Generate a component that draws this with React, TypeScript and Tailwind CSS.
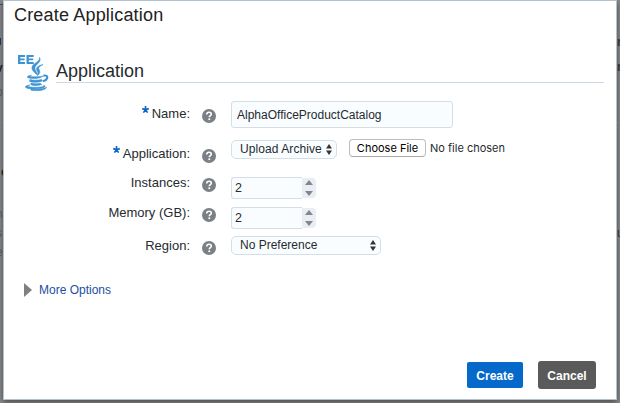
import type { ReactNode } from "react";

function Help({ className }: { className: string }) {
  return (
    <svg className={`ml-3 h-[14px] w-[14px] shrink-0 ${className}`} viewBox="0 0 14 14">
      <circle cx="7" cy="7" r="7" fill="#7b8086" />
      <path d="M4.7 5.5C4.8 4 5.8 3.3 7.1 3.3s2.2.7 2.2 1.9c0 1.5-2 1.5-2 3.1" fill="none" stroke="#fff" strokeWidth="1.6" />
      <rect x="6.4" y="9.4" width="1.8" height="1.7" fill="#fff" />
    </svg>
  );
}

function Row({ label, required, height, labelPad, helpPad, children }: {
  label: string; required?: boolean; height: string; labelPad: string; helpPad: string; children: ReactNode;
}) {
  return (
    <div className={`flex items-start ${height}`}>
      <div className={`flex w-[186px] justify-end text-[13px] leading-4 ${labelPad}`}>
        {required && (
          <svg className="mr-[3px] h-[7px] w-[7px]" viewBox="0 0 7 7">
            <path d="M3.5 3.7V0M3.5 3.7L0.2 2.6M3.5 3.7L6.8 2.6M3.5 3.7L1.4 6.6M3.5 3.7L5.6 6.6" stroke="#0b66cb" strokeWidth="1.6" />
          </svg>
        )}
        <span className="whitespace-nowrap">{label}</span>
      </div>
      <Help className={helpPad} />
      <div className="ml-[15px] flex">{children}</div>
    </div>
  );
}

function Select({ value, className }: { value: string; className: string }) {
  return (
    <div className={`flex items-center justify-between rounded-[5px] border border-[#d3dfe5] bg-[#f9fdff] pr-1 pb-px pl-2 text-[12px] ${className}`}>
      <span className="whitespace-nowrap leading-4">{value}</span>
      <svg className="mt-px h-[11px] w-[6px] shrink-0" viewBox="0 0 6 11">
        <path d="M3 0L6 4.6H0zM3 11L0 6.4H6z" fill="#333" />
      </svg>
    </div>
  );
}

function Spinner({ value }: { value: string }) {
  return (
    <div className="flex h-[22px]">
      <div className="flex w-[71px] items-center rounded-l-[3px] border border-r-0 border-[#d3dfe5] bg-[#f9fdff] pl-[3px] text-[12.5px]">{value}</div>
      <svg className="mt-px h-[20px] w-[14px] rounded-r-sm bg-[#e9edf4]" viewBox="0 0 14 20">
        <path d="M7 2L11 7H3zM7 18L3 13H11z" fill="#83878b" />
      </svg>
    </div>
  );
}

function JavaIcon() {
  return (
    <svg className="h-[38px] w-[32px] shrink-0" viewBox="0 0 32 38">
      <path d="M1 2H8V4H3.300V5.500H7.600V7.300H3.300V9H8V11H1zM9.500 2H16.700V4H11.800V5.500H16.200V7.300H11.800V9H16.700V11H9.500z" fill="#3e93d2" />
      <g fill="#3e93d2" stroke="#3e93d2" strokeWidth="0.6">
        <path d="M22.6 4.500c2.600 5.200-5.400 7-4.700 11.300.3 2 2.400 3.700 3 6.700-3-2.600-6.300-5-5.900-8.200.5-4 7.700-5 7.600-9.800z" />
        <path d="M26 11.600c-4.300 2.200-5 3.400-3.800 5.200 1.200 1.800.7 4-1.500 5.400.7-2 .3-2.900-.7-4.600-1.500-2.600.6-5 6-6z" />
        <path d="M14.500 22.300c-2 .8-2 1.300 0 1.400 4.500.4 8.800 0 12-.8-2.500 2.100-8 2.900-13 2.400-5-.5-3.600-2.700 1-3z" />
        <path d="M13 26.500c3 1 7.500 1 11.500.1l1 1.300c-4.500 1.700-10 1.800-13 .4zM14 30c2.800 1 6 .9 9 .2l1.800 1.300c-3.800 1.400-8.600 1.400-11 .1z" />
        <path d="M13 32c-3 .7-3 1.700.5 2 5 .6 10.500.4 13.500-.7l-.4-1.100c3.400 1.400.4 2.900-4.400 3.400-5 .6-10.400.3-12.700-.7-2.500-1.100-.2-2.700 3.500-2.900z" />
        <path d="M14 36c6 .5 12.500.1 15.600-1.700-1.400 3.300-9.800 4.200-15.600 2.900z" />
      </g>
      <path d="M26.500 22.600c5.500-1.100 4.800 4.200-.5 5.700" fill="none" stroke="#3e93d2" strokeWidth="2.100" />
    </svg>
  );
}

export default function App() {
  return (
    <div className="relative h-[403px] overflow-hidden bg-[#8b8b8b] px-[3px] font-['Liberation_Sans',Arial,sans-serif] text-[#252b30]">
      <div className="relative flex h-[400px] flex-col border border-[#b4c1ce] bg-white shadow-[0_2px_6px_rgba(0,0,0,0.5)]">
        <h1 className="mt-1 ml-[10px] h-[48px] text-[18px] leading-[21px] tracking-[0.18px] whitespace-nowrap text-[#222]">Create Application</h1>
        <div className="ml-[13px] flex h-[48px]">
          <JavaIcon />
          <h2 className="ml-[7px] h-[30px] w-[548px] border-b border-[#ccd8e5] pt-[8px] text-[18px] leading-[20px]">Application</h2>
        </div>
        <Row label="Name:" required height="h-[38px]" labelPad="pt-[5px]" helpPad="mt-[8px]">
          <div className="flex h-[27px] w-[222px] items-center rounded-[3px] border border-[#d3dfe5] bg-[#f9fdff] pl-[5px] text-[12px]">AlphaOfficeProductCatalog</div>
        </Row>
        <Row label="Application:" required height="h-[38px]" labelPad="pt-[7px]" helpPad="mt-[10px]">
          <Select value="Upload Archive" className="mt-px h-[19px] w-[106px] tracking-[0.08px]" />
          <div className="ml-3 flex h-[18px] w-[77px] items-center justify-center rounded-[4px] border border-[#bdbdbd] border-b-[#aaa] bg-white font-[Inter] text-[11px] whitespace-nowrap text-black">Choose File</div>
          <span className="ml-1 font-[Inter] text-[11px] leading-[18px] whitespace-nowrap">No file chosen</span>
        </Row>
        <Row label="Instances:" height="h-[30px]" labelPad="-mt-[2px]" helpPad="mt-px"><Spinner value="2" /></Row>
        <Row label="Memory (GB):" height="h-[29px]" labelPad="-mt-[2px]" helpPad="mt-[1px]"><Spinner value="2" /></Row>
        <Row label="Region:" height="h-[47px]" labelPad="pt-[2px]" helpPad="mt-[5px]">
          <Select value="No Preference" className="h-[19px] w-[150px]" />
        </Row>
        <div className="ml-5 flex h-[14px] items-center text-[12px] text-[#1c4f9f]">
          <svg className="h-[14px] w-[8px]" viewBox="0 0 8 14"><path d="M0 0L8 7L0 14z" fill="#7e8184" /></svg>
          <span className="ml-[7px] leading-4">More Options</span>
        </div>
        <div className="mt-auto mr-5 mb-[10px] flex items-center justify-end gap-[15px] text-[12px] font-bold text-white">
          <button className="h-[26px] w-[56px] rounded-[2px] bg-[#0569cc] pt-px">Create</button>
          <button className="h-[28px] w-[58px] rounded-[3px] bg-[#5a5a5a] pt-px">Cancel</button>
        </div>
      </div>
      <div className="absolute top-0 left-0 h-[403px] w-[3px] overflow-hidden text-[12px] leading-[14px] text-[#555]">
        <div className="absolute top-[4px] h-px w-[3px] bg-[#24507c]" />
        <div className="absolute top-[38px] h-[7px] w-px bg-[#24345f]" />
        <b className="absolute top-[61px] -left-[4px] text-[#222]">v</b>
        <span className="absolute top-[85px] -left-[4px]">p</span>
        <div className="absolute top-[122px] h-px w-[3px] bg-[#777b80]" />
        <b className="absolute top-[165px] left-[1px] text-[#222]">c</b>
        <span className="absolute top-[207px] -left-[4px]">n</span>
        <span className="absolute top-[226px] -left-[4px]">s</span>
        <span className="absolute top-[245px] -left-[4px]">e</span>
      </div>
      <div className="absolute top-0 right-0 h-[403px] w-[3px] overflow-hidden text-[12px] leading-[14px] text-[#333]">
        <b className="absolute top-[35px] left-0">n</b>
        <b className="absolute top-[60px] left-0">n</b>
        <div className="absolute top-[122px] h-px w-[3px] bg-[#777b80]" />
        <span className="absolute top-[226px] left-0">u</span>
      </div>
    </div>
  );
}
